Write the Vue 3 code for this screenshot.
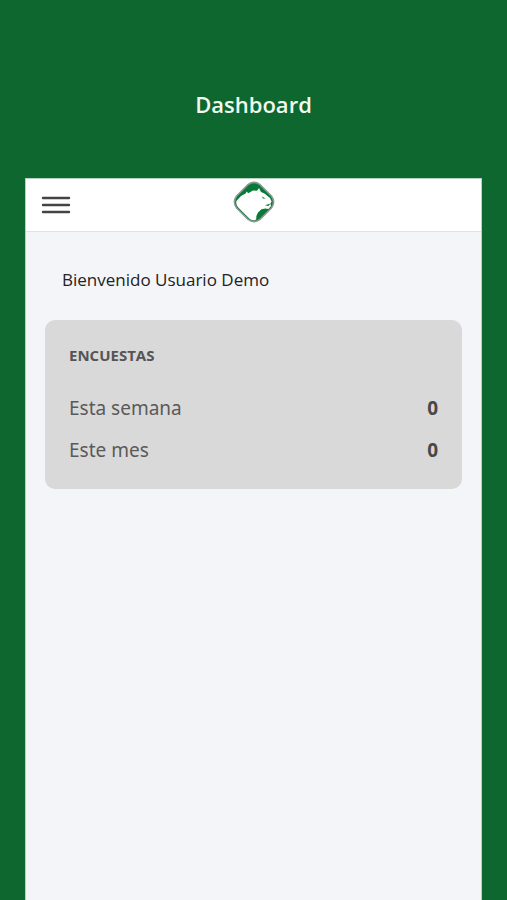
<script setup>
const title = 'Dashboard'
const user = 'Usuario Demo'
const surveys = [
  { label: 'Esta semana', count: 0 },
  { label: 'Este mes', count: 0 },
]
</script>

<template>
  <div class="page">
    <h1 class="title">{{ title }}</h1>
    <div class="screen">
      <header class="topbar">
        <button class="menu" type="button" aria-label="Menú">
          <svg width="30" height="20" viewBox="0 0 30 20" aria-hidden="true">
            <path d="M2 3h26M2 10h26M2 17h26" stroke="#444" stroke-width="2.4" stroke-linecap="round" />
          </svg>
        </button>
        <svg class="logo" width="42" height="42" viewBox="0 0 42 42" aria-hidden="true">
          <path d="M15 3.6Q21 -.8 27 3.6L38.4 15Q42.8 21 38.4 27L27 38.4Q21 42.8 15 38.4L3.6 27Q-.8 21 3.6 15Z" fill="#087a38" stroke="#8d9993" stroke-width="1.6" />
          <path d="M3.4 20L8 15L12.6 12.4L13.6 10.4L15.2 12.2L20 9.4L24 9.7L26 7L28 11L31.5 12.5L34.5 15L37 17L38.6 20.5L37.4 22.5L38 25L35.5 28L32.4 27.6L28.5 28.3L25 31.4L23.4 35L23.2 38.6Q20.5 40.2 16.8 37.9L4.8 26Q2.7 23.2 3.4 20Z" fill="#fff" />
          <path d="M28.8 15.6l4 1.8-2.8.2ZM32 24.2l5.4-1.8-2 2.6Z" fill="#087a38" />
        </svg>
      </header>
      <main class="content">
        <p class="welcome">Bienvenido {{ user }}</p>
        <section class="card">
          <h2 class="card-title">ENCUESTAS</h2>
          <dl class="stats">
            <div v-for="item in surveys" :key="item.label" class="row">
              <dt>{{ item.label }}</dt>
              <dd>{{ item.count }}</dd>
            </div>
          </dl>
        </section>
      </main>
    </div>
  </div>
</template>

<style>
body {
  margin: 0;
  background: #0d672f;
}
</style>

<style scoped>
.page {
  box-sizing: border-box;
  display: flex;
  flex-direction: column;
  min-height: 100vh;
  padding: 89px 25px 0;
  background: #0d672f;
  font-family: "Open Sans", "Noto Sans", sans-serif;
}
.title {
  margin: 0 0 59px;
  color: #f2faf0;
  font-size: 22px;
  font-weight: 600;
  line-height: 30px;
  text-align: center;
}
.screen {
  flex: 1;
  border: 1px solid #b5d3c0;
  border-bottom: 0;
  background: #f4f5f9;
}
.topbar {
  display: grid;
  grid-template-columns: 1fr auto 1fr;
  align-items: center;
  height: 52px;
  padding: 0 15px;
  border-bottom: 1px solid #e1e2e4;
  background: #fff;
}
.menu {
  display: flex;
  justify-self: start;
  padding: 0;
  border: 0;
  background: none;
}
.logo {
  margin-bottom: 6px;
}
.content {
  padding: 36px 19px;
}
.welcome {
  margin: 0 17px 28px;
  color: #222;
  font-size: 17px;
  line-height: 24px;
}
.card {
  padding: 25px 24px;
  border-radius: 10px;
  background: #d9d9d9;
}
.card-title {
  margin: 0 0 29px;
  color: #555;
  font-size: 15px;
  font-weight: 700;
  line-height: 20px;
}
.stats {
  display: grid;
  gap: 14px;
  margin: 0;
  font-family: "Noto Sans", "Open Sans", sans-serif;
}
.row {
  display: flex;
  justify-content: space-between;
  color: #5a5a5a;
  font-size: 19px;
  line-height: 28px;
}
dd {
  margin: 0;
  color: #484848;
  font-weight: 700;
}
</style>
